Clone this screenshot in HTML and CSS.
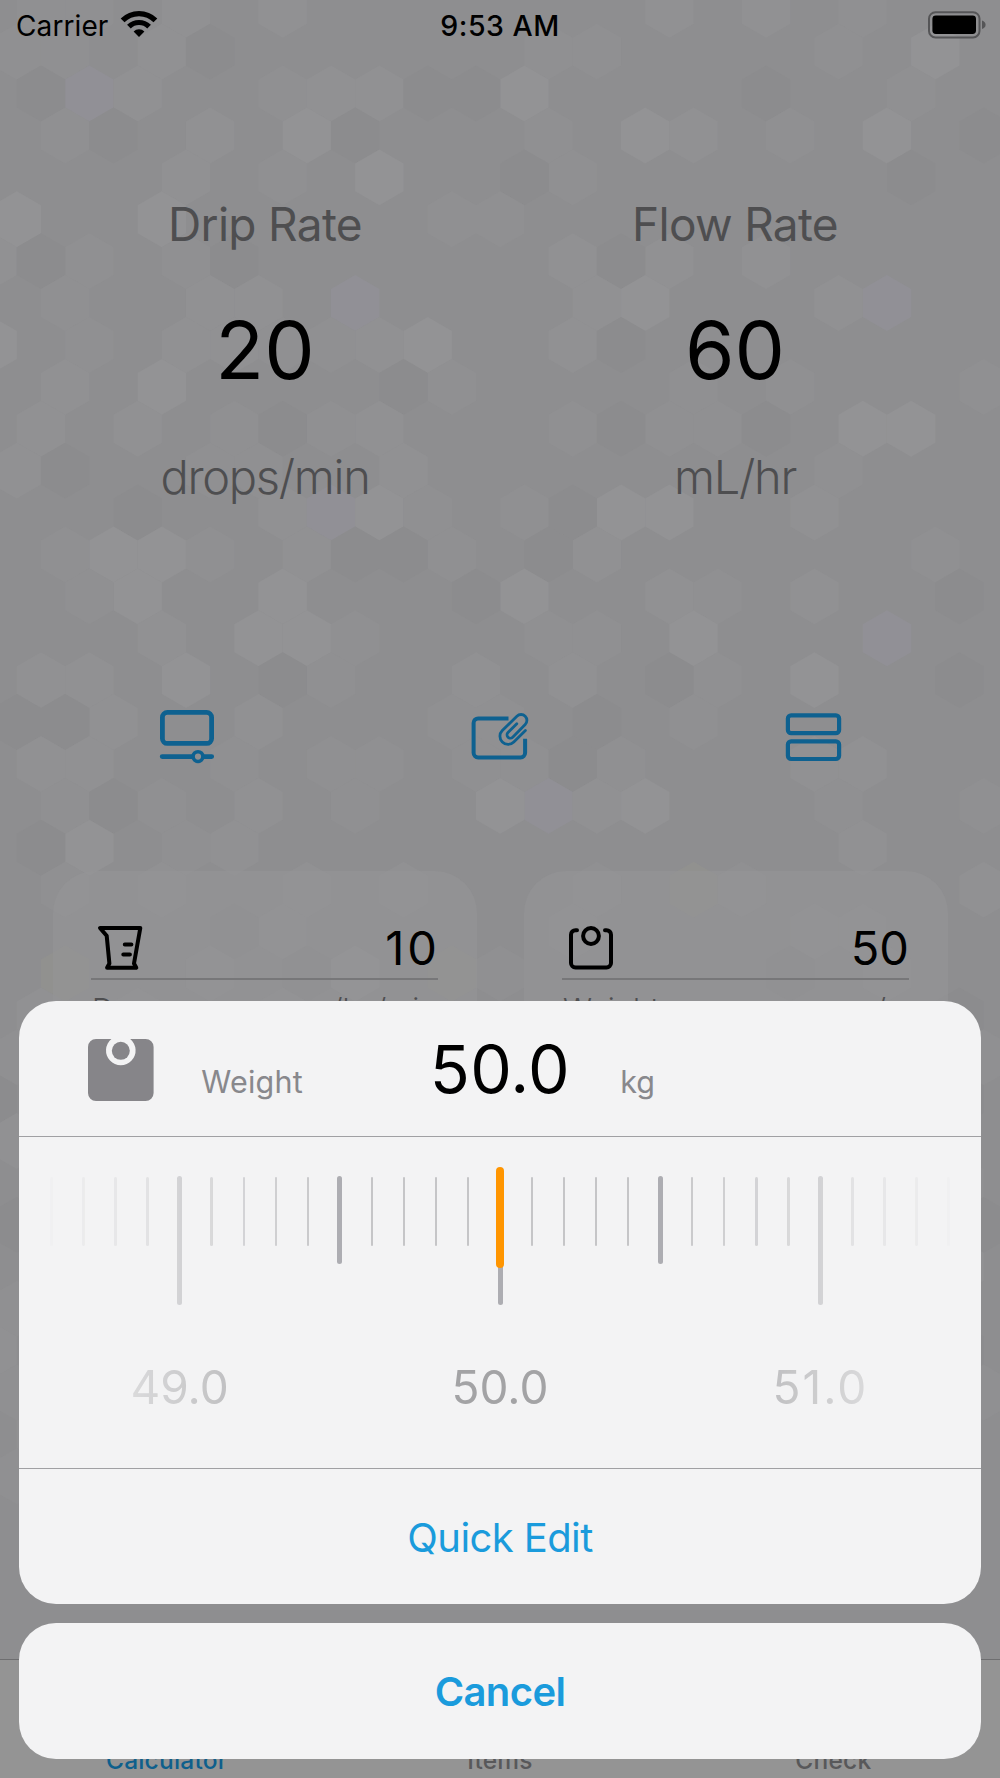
FILE: index.html
```
<!DOCTYPE html>
<html>

<head>
    <meta charset="utf-8">
    <meta name="viewport" content="width=device-width, initial-scale=1.0" />
    <title>Drip Rate</title>
    <link rel="stylesheet" href="styles.css">
</head>

<body>
    <div class="screen">
        <svg id="hexagons" class="hexagons" width="1000" height="1778"></svg>

        <!-- Status bar -->
        <div class="status-bar">
            <div class="carrier">
                <span class="carrier-name">Carrier</span>
                <svg width="38" height="28" viewBox="0 0 38 28">
                    <path d="M2.6 10.4a23.2 23.2 0 0 1 32.8 0" fill="none" stroke="#000" stroke-width="5.4" />
                    <path d="M8.9 16.7a14.3 14.3 0 0 1 20.2 0" fill="none" stroke="#000" stroke-width="5.2" />
                    <path d="M19 27l-5.4-5.6a7.6 7.6 0 0 1 10.8 0z" />
                </svg>
            </div>
            <div class="time">9:53 AM</div>
            <div class="battery">
                <svg width="60" height="28" viewBox="0 0 60 28">
                    <rect x="1" y="1.2" width="50.5" height="25.2" rx="6.5" fill="none" stroke="#555557" stroke-width="2" />
                    <rect x="4.4" y="4.6" width="43.6" height="18.4" rx="3.4" />
                    <path d="M54 9.5q3.6 1.3 3.6 4.3t-3.6 4.3z" fill="#555557" />
                </svg>
            </div>
        </div>

        <!-- Rates -->
        <div class="rates">
            <div class="rate">
                <div class="rate-title">Drip Rate</div>
                <div class="rate-value">20</div>
                <div class="rate-unit">drops/min</div>
            </div>
            <div class="rate">
                <div class="rate-title">Flow Rate</div>
                <div class="rate-value">60</div>
                <div class="rate-unit">mL/hr</div>
            </div>
        </div>

        <!-- Tool buttons -->
        <div class="tools">
            <svg width="60" height="60" viewBox="157 706 60 60">
                <rect x="162.4" y="712.4" width="49.2" height="31" rx="5" stroke-width="4.8" />
                <path d="M162.2 756.6h29.5M204.5 756.6h7.2" stroke-width="4.8" />
                <circle cx="198" cy="756.6" r="4.9" stroke-width="3.6" />
            </svg>
            <svg width="60" height="60" viewBox="470 706 60 60">
                <path d="M508.5 718.4h-30.3a4.6 4.6 0 0 0-4.6 4.6v29.8a4.6 4.6 0 0 0 4.6 4.6h42.3a4.6 4.6 0 0 0 4.6-4.6v-14" stroke-width="4" stroke-linecap="butt" />
                <path d="M525.4 730.6l-11.600 11.400a8 8 0 0 1-11.500-11.500l14.600-14.300a5.800 5.800 0 0 1 8.300 8.300l-12.500 12.700a3.300 3.300 0 0 1-4.700-4.700l8.800-8.800" stroke-width="2.8" />
            </svg>
            <svg width="60" height="60" viewBox="783 706 60 60">
                <rect x="787.9" y="715.4" width="51.2" height="17.7" rx="3.2" stroke-width="4.2" />
                <rect x="787.9" y="741.3" width="51.2" height="17.7" rx="3.2" stroke-width="4.2" />
            </svg>
        </div>

        <!-- Cards, mostly behind the sheet -->
        <div class="cards">
            <div class="card">
                <div class="card-top">
                    <svg width="50" height="50" viewBox="95 923 50 50">
                        <path d="M100 928h40.3l-6.3 35.5 2.3 4.2h-29.2l2.3-4.2-2.7-27.7z" />
                        <path d="M124.8 944.6h6.6M123.3 954.4h6.6" />
                    </svg>
                    <span class="drops">10</span>
                </div>
                <div class="card-bottom"><span>Dose</span><span class="dose-unit">mcg/kg/min</span></div>
            </div>
            <div class="card">
                <div class="card-top">
                    <svg width="50" height="50" viewBox="566 923 50 50">
                        <path d="M577 930.2h-1.5a4.5 4.5 0 0 0-4.5 4.5v28.3a4.5 4.5 0 0 0 4.5 4.5h31a4.5 4.5 0 0 0 4.5-4.5v-28.3a4.5 4.5 0 0 0-4.5-4.5h-1.5" />
                        <circle cx="591" cy="936" r="7.9" />
                    </svg>
                    <span>50</span>
                </div>
                <div class="card-bottom"><span>Weight</span><span class="weight-unit">/</span></div>
            </div>
        </div>

        <div class="tab-bar">
            <div class="active">Calculator</div>
            <div>Items</div>
            <div>Check</div>
        </div>

        <!-- Action sheet -->
        <div class="action-sheet">
            <div class="sheet">
                <div class="sheet-header">
                    <svg width="68" height="64" viewBox="0 0 68 64">
                        <path d="M8 1h15.4a14.8 14.8 0 1 0 18.8 0h15.4a8 8 0 0 1 8 8v46a8 8 0 0 1-8 8h-49.6a8 8 0 0 1-8-8v-46a8 8 0 0 1 8-8z" />
                        <circle cx="32.8" cy="12.8" r="9" />
                    </svg>
                    <span class="sheet-name">Weight</span>
                    <span class="sheet-value">50.0</span>
                    <span class="sheet-unit">kg</span>
                </div>
                <div class="ruler">
                    <div class="ruler-fade">
                        <div id="ticks" class="ticks"></div>
                        <div class="tick-labels">
                            <span>49.0</span>
                            <span>50.0</span>
                            <span class="next">51.0</span>
                        </div>
                    </div>
                    <div class="needle"></div>
                </div>
                <div class="quick-edit">Quick Edit</div>
            </div>
            <div class="cancel">Cancel</div>
        </div>
    </div>

    <script>
        // Columns of the hexagons on each row: b = bright, l = light, s = soft, d = dark, p = purple, y = yellow
        var rows = [
            { l: [3, 5, 13, 15], s: [0, 1, 17] },
            { b: [19], l: [3], s: [0, 1, 11, 12, 17], d: [4] },
            { p: [1], b: [10], l: [2, 6, 7], s: [5, 18], d: [0, 8, 9, 15] },
            { b: [6, 13, 18], l: [4, 14], s: [1, 11, 16], d: [2, 7, 20] },
            { b: [7], l: [3], s: [5, 11], d: [10, 18] },
            { b: [0, 3], l: [], s: [9, 10] },
            { l: [-1, 11, 13, 15], s: [1, 3], d: [0, 4, 12] },
            { p: [7, 18], b: [13], l: [12, 5, 4, 17], s: [1] },
            { b: [-1, 8], l: [3, 4, 7, 11], s: [1, 5, 6], d: [12] },
            { b: [3], l: [1], s: [9, 14, 16, 20], d: [8] },
            { b: [17, 18], l: [0, 2, 7], s: [4, 6, 11, 13, 14], d: [5, 12, 15] },
            { l: [0, 8], s: [4, 5, 17], d: [1] },
            { p: [6], b: [7, 12, 13], l: [5, 16], s: [8, 10], d: [2, 11] },
            { b: [2, 3], l: [6, 12], s: [1, 4, 9, 19], d: [7, 8, 11] },
            { b: [2, 5, 10], l: [13, 16], s: [1, 14], d: [9, 19] },
            { p: [18], b: [5, 6, 14], l: [3], s: [7, 11, 12] },
            { b: [3, 16], l: [0, 1, 9, 11], s: [14, 6], d: [5, 13, 19] },
            { l: [2, 5], s: [9, 10, 14], d: [0, 1, 12] },
            { l: [0, 1, 16, 17], s: [4, 6, 7, 9, 10, 12], d: [11] },
            { p: [11], b: [10, 13], l: [12, 5], s: [1, 3, 7, 17, 20], d: [2] },
            { b: [1], l: [4, 17], s: [3], d: [0] },
            { l: [3, 6, 8, 20], s: [1, 12, 15], y: [14] },
            { l: [11, 16], s: [5, 17], d: [4] },
            { b: [7], l: [4, 18], s: [10], y: [1, 9], d: [6, 16] },
            { l: [0], s: [2, 5], d: [19] },
            { s: [0, 20] }, { d: [-1, 19] }, { l: [0] }, { s: [19] }, { d: [0, 20] },
            { l: [19] }, { s: [0] }, { l: [-1], d: [19] }, { s: [0, 20] },
            { l: [0, 5, 9, 16], s: [3, 7, 13] }, { s: [0, 2, 9, 14, 18], d: [4, 12] }
        ];
        var shades = { b: "#939395", l: "#919193", s: "#909092", d: "#8c8c8e", p: "#919096", y: "#91918f" };

        function drawHexagons() {
            var shapes = "";
            rows.forEach(function (row, r) {
                var y = 9.7 + r * 41.9;
                var left = r % 2 ? 16.8 : 41;
                for (var shade in row) {
                    row[shade].forEach(function (c) {
                        var x = left + c * 48.34;
                        shapes += '<path fill="' + shades[shade] + '" d="M' + x + ' ' + (y - 27.9) +
                            'l24.2 14v27.9l-24.2 14l-24.2 -14v-27.9z"/>';
                    });
                }
            });
            document.getElementById("hexagons").innerHTML = shapes;
        }

        // 14 ticks on each side of the current value
        function drawTicks() {
            var html = "";
            for (var i = -14; i <= 14; i++) {
                var size = i % 10 == 0 ? "large" : i % 5 == 0 ? "medium" : "small";
                html += '<div class="tick ' + size + '"></div>';
            }
            document.getElementById("ticks").innerHTML = html;
        }

        drawHexagons();
        drawTicks();
    </script>
</body>

</html>
```
FILE: styles.css
```
* {
    box-sizing: border-box;
}

body {
    margin: 0;
    font-family: Inter, "Liberation Sans", sans-serif;
    color: #000;
}

.screen {
    position: relative;
    width: 1000px;
    height: 1778px;
    overflow: hidden;
    background: #8e8e90;
}

.hexagons {
    position: absolute;
    top: 0;
    left: 0;
}

.status-bar,
.rates,
.tools,
.cards {
    position: relative;
}

.status-bar {
    display: grid;
    grid-template-columns: 1fr 1fr 1fr;
    height: 50px;
    padding: 0 12px 0 16px;
    font-size: 28px;
    line-height: 52px;
}

.carrier {
    display: flex;
    gap: 10px;
}

.carrier svg {
    margin-top: 10px;
}

.carrier-name {
    width: 94px;
    letter-spacing: 0.1px;
}

.time {
    font-size: 28.5px;
    font-weight: 500;
    letter-spacing: 0.5px;
    text-align: center;
    text-indent: -4px;
}

.battery svg {
    display: block;
    margin: 11px 0 0 auto;
}

.rates {
    display: grid;
    grid-template-columns: 470px 470px;
    justify-content: center;
    padding-top: 144px;
    text-align: center;
}

.rate-title {
    color: #4e4e50;
    font-size: 46px;
    font-weight: 400;
    line-height: 60px;
    letter-spacing: -0.7px;
}

.rate-value {
    margin: 46px 0;
    font-size: 80px;
    line-height: 100px;
}

.rate-unit {
    color: #4e4e50;
    font-size: 47px;
    font-weight: 300;
    line-height: 62px;
    letter-spacing: -1.3px;
}

.tools {
    display: grid;
    grid-template-columns: repeat(3, 1fr);
    justify-items: center;
    padding: 0 30px;
    margin-top: 198px;
    fill: none;
    stroke: #0e6190;
    stroke-linecap: round;
}

.cards {
    display: flex;
    justify-content: center;
    gap: 47px;
    margin-top: 105px;
}

.card {
    width: 424px;
    height: 300px;
    padding: 50px 38.5px 0;
    border-radius: 42px;
    background: rgba(150, 150, 151, 0.5);
}

.card-top {
    display: flex;
    justify-content: space-between;
    height: 58.5px;
    padding: 2px 0 0 4px;
    border-bottom: 2px solid #777779;
    font-size: 47px;
    line-height: 50px;
}

.card-top svg {
    fill: none;
    stroke: #000;
    stroke-width: 4;
    stroke-linecap: round;
    stroke-linejoin: round;
}

.drops {
    letter-spacing: 3px;
    margin-right: -2px;
}

.card-bottom {
    display: flex;
    justify-content: space-between;
    padding: 9px 1px 0;
    color: #4e4e50;
    font-size: 30px;
    font-weight: 350;
    line-height: 40px;
}

.weight-unit {
    padding-right: 22px;
}

.tab-bar {
    position: absolute;
    left: 0;
    right: 0;
    bottom: 0;
    display: grid;
    grid-template-columns: repeat(3, 1fr);
    height: 119px;
    padding-top: 82px;
    border-top: 1px solid #6e6e70;
    background: #949494;
    color: #58585a;
    font-size: 24.5px;
    font-weight: 500;
    line-height: 36px;
    letter-spacing: 0.2px;
    text-align: center;
}

.tab-bar .active {
    color: #0e5f8c;
}

.action-sheet {
    position: absolute;
    left: 19.3px;
    right: 19.3px;
    bottom: 19px;
    color: #1a9bdc;
    font-size: 40px;
    letter-spacing: -0.6px;
    text-align: center;
}

.sheet,
.cancel {
    border-radius: 37px;
    background: #f3f3f4;
}

.sheet {
    height: 603px;
    margin-bottom: 19px;
}

.sheet-header {
    display: grid;
    grid-template-columns: 113px 179px 239px 1fr;
    height: 136px;
    padding-left: 69px;
    border-bottom: 1px solid #a0a0a3;
    color: #88888c;
    font-size: 30.5px;
    letter-spacing: 0;
    line-height: 40px;
    text-align: left;
}

.sheet-header svg {
    margin-top: 37px;
    fill: #868589;
}

.sheet-name,
.sheet-unit {
    padding-top: 61px;
}

.sheet-name {
    letter-spacing: 0.2px;
}

.sheet-value {
    padding-top: 28px;
    color: #000;
    font-size: 66px;
    letter-spacing: 0.2px;
    line-height: 80px;
    text-align: center;
}

.sheet-unit {
    padding-left: 1px;
}

.ruler {
    position: relative;
    height: 332px;
    border-bottom: 1px solid #a0a0a3;
    letter-spacing: 0;
}

.ruler-fade {
    height: 331px;
    padding-top: 39px;
    -webkit-mask-image: linear-gradient(to right, transparent 18px, #000 320px, #000 642px, transparent 944px);
    mask-image: linear-gradient(to right, transparent 18px, #000 320px, #000 642px, transparent 944px);
}

.ticks {
    display: grid;
    grid-template-columns: repeat(29, 32.04px);
    justify-content: center;
    justify-items: center;
    height: 130px;
}

.tick {
    border-radius: 3px;
}

.small {
    width: 2.5px;
    height: 69px;
    margin-top: 1px;
    background: #c5c5c7;
}

.medium {
    width: 5px;
    height: 88px;
    background: #adadb2;
}

.large {
    width: 5px;
    height: 129px;
    background: #adadb2;
}

.tick-labels {
    display: grid;
    grid-template-columns: repeat(3, 320.4px);
    justify-content: center;
    margin-top: 51px;
    color: #a3a3a5;
    font-size: 46px;
    line-height: 60px;
}

.next {
    letter-spacing: 2px;
}

.needle {
    position: absolute;
    top: 30px;
    left: calc(50% - 3.8px);
    width: 7.6px;
    height: 101px;
    border-radius: 4px;
    background: #ff9500;
}

.quick-edit {
    height: 135px;
    line-height: 137px;
}

.cancel {
    height: 136px;
    font-weight: 600;
    line-height: 137px;
}
```
